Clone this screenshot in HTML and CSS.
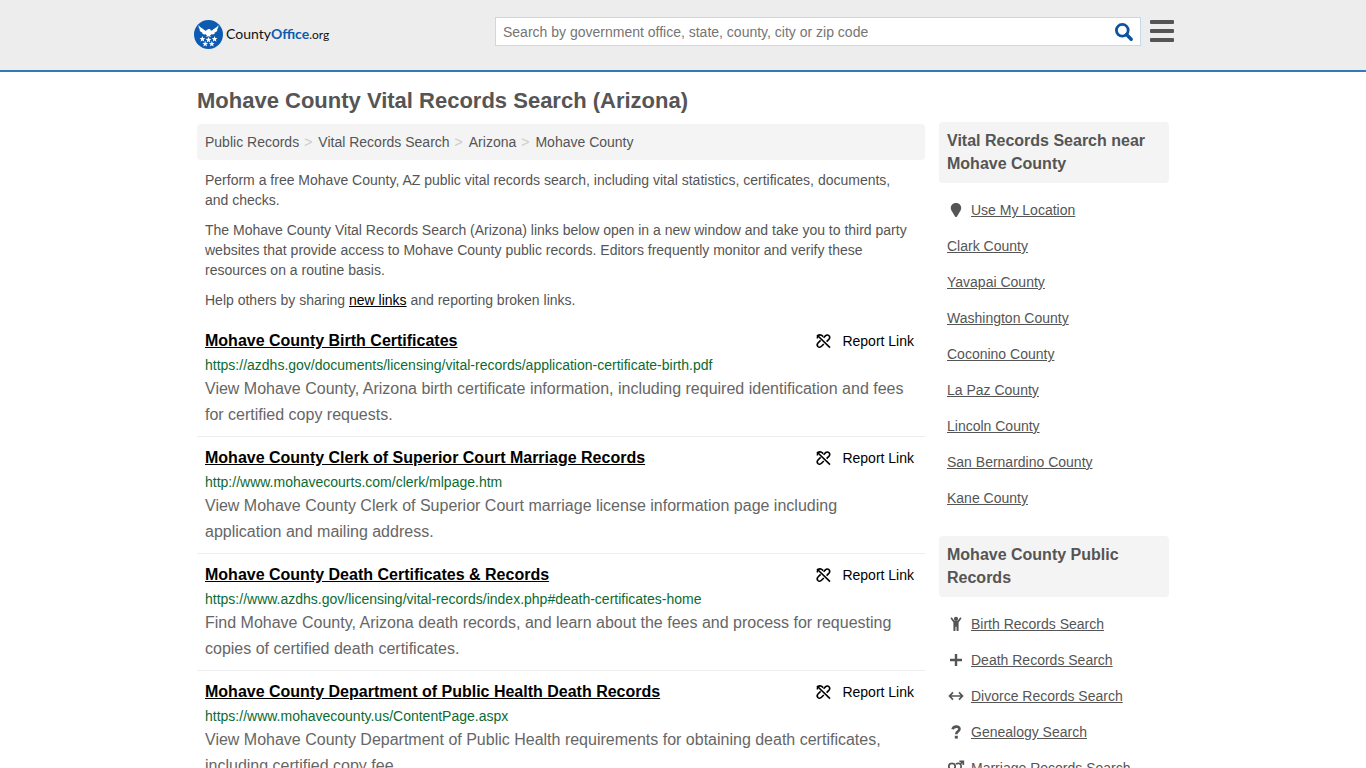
FILE: index.html
```html
<!DOCTYPE html>
<html lang="en">
<head>
    <meta charset="UTF-8">
    <meta name="viewport" content="width=device-width, initial-scale=1.0">
    <title>Mohave County Vital Records Search (Arizona)</title>
    <link rel="stylesheet" href="styles.css">
</head>
<body>
    <!-- Shared icons -->
    <svg class="sprite" aria-hidden="true">
        <symbol id="icon-unlink" viewBox="0 0 16 16">
            <g fill="none" stroke="currentColor" stroke-width="1.6">
                <path d="M2 2L15 14.6"/>
                <path d="M2.6 5.6C1.8 3.4 3.2 1.9 5 1.9C6.4 1.9 7.2 2.6 8.2 3.6"/>
                <path d="M8.6 4.8L10.4 2.9C11.5 1.8 13.1 1.8 14 2.8C15 3.9 14.8 5.3 13.8 6.4L11.6 8.6"/>
                <path d="M5.6 7.4L3 10C2 11.1 2 12.5 2.9 13.5C3.9 14.5 5.4 14.4 6.5 13.3L8.8 11"/>
            </g>
        </symbol>
    </svg>

    <header class="header">
        <div class="header-inner">
            <a class="logo" href="#" aria-label="CountyOffice.org">
                <svg class="logo-mark" viewBox="0 0 30 30" aria-hidden="true">
                    <circle cx="15" cy="15" r="15" fill="#0c5bb0"/>
                    <g fill="#fff">
                        <path d="M4.7 5.3C6.3 8.3 9.3 8.9 11.7 11.2C12.6 11.2 13 10.2 14.6 9.5C15.9 9.1 17 9.6 17.2 10.5L18.3 11.2C20.7 8.9 23.7 8.3 25.3 5.3C25.4 7.6 24.8 9 23.7 10L24.5 10.1C23.8 11.8 22.6 12.7 21.2 13L21.7 13.6C20.5 14.8 19.3 15.1 18 14.8L16.5 16.2L17.9 17.5L15 16.7L12.1 17.5L13.5 16.2L12 14.8C10.7 15.1 9.5 14.8 8.3 13.6L8.8 13C7.4 12.7 6.2 11.8 5.5 10.1L6.3 10C5.2 9 4.6 7.6 4.7 5.3Z"/>
                        <path id="star" d="M8.7 16.6L9.5 18.7L11.7 18.8L10 20.2L10.6 22.4L8.7 21.2L6.8 22.4L7.4 20.2L5.7 18.8L7.9 18.7Z"/>
                        <use href="#star" x="6.3" y="0.8"/>
                        <use href="#star" x="12.6"/>
                        <use href="#star" x="2.9" y="5"/>
                        <use href="#star" x="9.7" y="5"/>
                    </g>
                </svg>
                <span class="logo-text">County<b>Office</b><span class="logo-tld">.org</span></span>
            </a>
            <form class="search" role="search">
                <input class="search-input" type="text" aria-label="Search" placeholder="Search by government office, state, county, city or zip code">
                <button class="search-button" type="button" aria-label="Submit search">
                    <svg width="20" height="20" viewBox="0 0 20 20" aria-hidden="true">
                        <circle cx="8.3" cy="8.3" r="5.9" fill="none" stroke="currentColor" stroke-width="2.8"/>
                        <path d="M12.5 12.5L17.2 17.2" stroke="currentColor" stroke-width="3.4" stroke-linecap="round"/>
                    </svg>
                </button>
            </form>
            <button class="menu-button" type="button" aria-label="Menu">
                <span></span><span></span><span></span>
            </button>
        </div>
    </header>

    <div class="container">
        <h1>Mohave County Vital Records Search (Arizona)</h1>
        <div class="columns">
            <main class="main">
                <nav class="breadcrumb" aria-label="Breadcrumb">
                    <a href="#">Public Records</a>
                    <a href="#">Vital Records Search</a>
                    <a href="#">Arizona</a>
                    <a href="#">Mohave County</a>
                </nav>

                <div class="intro">
                    <p>Perform a free Mohave County, AZ public vital records search, including vital statistics, certificates, documents, and checks.</p>
                    <p>The Mohave County Vital Records Search (Arizona) links below open in a new window and take you to third party websites that provide access to Mohave County public records. Editors frequently monitor and verify these resources on a routine basis.</p>
                    <p>Help others by sharing <a href="#">new links</a> and reporting broken links.</p>
                </div>

                <article class="record">
                    <div class="record-head">
                        <a class="record-title" href="#">Mohave County Birth Certificates</a>
                        <button class="report" type="button"><svg class="report-icon"><use href="#icon-unlink"/></svg>Report Link</button>
                    </div>
                    <div class="record-url">https://azdhs.gov/documents/licensing/vital-records/application-certificate-birth.pdf</div>
                    <p class="record-text">View Mohave County, Arizona birth certificate information, including required identification and fees for certified copy requests.</p>
                </article>
                <article class="record">
                    <div class="record-head">
                        <a class="record-title" href="#">Mohave County Clerk of Superior Court Marriage Records</a>
                        <button class="report" type="button"><svg class="report-icon"><use href="#icon-unlink"/></svg>Report Link</button>
                    </div>
                    <div class="record-url">http://www.mohavecourts.com/clerk/mlpage.htm</div>
                    <p class="record-text">View Mohave County Clerk of Superior Court marriage license information page including application and mailing address.</p>
                </article>
                <article class="record">
                    <div class="record-head">
                        <a class="record-title" href="#">Mohave County Death Certificates &amp; Records</a>
                        <button class="report" type="button"><svg class="report-icon"><use href="#icon-unlink"/></svg>Report Link</button>
                    </div>
                    <div class="record-url">https://www.azdhs.gov/licensing/vital-records/index.php#death-certificates-home</div>
                    <p class="record-text">Find Mohave County, Arizona death records, and learn about the fees and process for requesting copies of certified death certificates.</p>
                </article>
                <article class="record">
                    <div class="record-head">
                        <a class="record-title" href="#">Mohave County Department of Public Health Death Records</a>
                        <button class="report" type="button"><svg class="report-icon"><use href="#icon-unlink"/></svg>Report Link</button>
                    </div>
                    <div class="record-url">https://www.mohavecounty.us/ContentPage.aspx</div>
                    <p class="record-text">View Mohave County Department of Public Health requirements for obtaining death certificates, including certified copy fee.</p>
                </article>
            </main>

            <aside class="sidebar">
                <h2>Vital Records Search near Mohave County</h2>
                <ul>
                    <li>
                        <svg class="side-icon" viewBox="0 0 18 18" fill="currentColor" aria-hidden="true"><path d="M9 2C5.8 2 3.8 4.2 3.8 7C3.8 8.6 4.5 9.6 5.2 10.8L8 15.4C8.5 16.2 9.5 16.2 10 15.4L12.8 10.8C13.5 9.6 14.2 8.6 14.2 7C14.2 4.2 12.2 2 9 2Z"/></svg>
                        <a href="#">Use My Location</a>
                    </li>
                    <li><a href="#">Clark County</a></li>
                    <li><a href="#">Yavapai County</a></li>
                    <li><a href="#">Washington County</a></li>
                    <li><a href="#">Coconino County</a></li>
                    <li><a href="#">La Paz County</a></li>
                    <li><a href="#">Lincoln County</a></li>
                    <li><a href="#">San Bernardino County</a></li>
                    <li><a href="#">Kane County</a></li>
                </ul>

                <h2>Mohave County Public Records</h2>
                <ul>
                    <li>
                        <svg class="side-icon" viewBox="0 0 18 18" fill="currentColor" aria-hidden="true"><circle cx="9" cy="3.9" r="2.1"/><path d="M4.9 2.6L7.4 5.8H10.6L13.1 2.6C14 2 14.8 2.8 14.2 3.8L11.6 7.6V15.2C11.6 16.4 9.6 16.4 9.5 15.2V11.8H8.5V15.2C8.4 16.4 6.4 16.4 6.4 15.2V7.6L3.8 3.8C3.2 2.8 4.2 2 4.9 2.6Z"/></svg>
                        <a href="#">Birth Records Search</a>
                    </li>
                    <li>
                        <svg class="side-icon" viewBox="0 0 18 18" fill="currentColor" aria-hidden="true"><path d="M7.8 3H10.2V7.8H15V10.2H10.2V15H7.8V10.2H3V7.8H7.8Z"/></svg>
                        <a href="#">Death Records Search</a>
                    </li>
                    <li>
                        <svg class="side-icon" viewBox="0 0 18 18" fill="none" stroke="currentColor" stroke-width="1.7" aria-hidden="true"><path d="M3 9H15M6 5.3L2.5 9L6 12.7M12 5.3L15.5 9L12 12.7"/></svg>
                        <a href="#">Divorce Records Search</a>
                    </li>
                    <li>
                        <svg class="side-icon" viewBox="0 0 18 18" aria-hidden="true"><path d="M5.6 6.2C6.3 3.2 12.5 2.4 12.5 6C12.5 8.4 9.3 8.1 9.3 11.2" fill="none" stroke="currentColor" stroke-width="2.6"/><rect x="7.8" y="12.8" width="3" height="2.8" fill="currentColor"/></svg>
                        <a href="#">Genealogy Search</a>
                    </li>
                    <li>
                        <svg class="side-icon" viewBox="0 0 18 18" fill="none" stroke="currentColor" stroke-width="1.7" aria-hidden="true"><circle cx="5" cy="7.5" r="3.2"/><path d="M9 5.2C11 3.2 14.2 4.8 14.2 7.5C14.2 10.2 11 11.8 9 9.8"/><path d="M5 11V16M2.7 13.7H7.3M13.4 5L15.9 2.5M12.4 2.3H16.3V6"/></svg>
                        <a href="#">Marriage Records Search</a>
                    </li>
                </ul>
            </aside>
        </div>
    </div>
</body>
</html>
```
FILE: styles.css
```css
* {
    box-sizing: border-box;
}
body {
    margin: 0;
    font-family: "Liberation Sans", Arial, sans-serif;
    font-size: 14px;
    line-height: 20px;
    color: #555;
    background-color: #fff;
}
button {
    padding: 0;
    border: none;
    background: none;
    font: inherit;
    cursor: pointer;
}
.sprite {
    display: none;
}

/* Header */
.header {
    background-color: #ededed;
    border-bottom: 2px solid #337ab7;
}
.header-inner {
    display: flex;
    align-items: flex-start;
    max-width: 982px;
    margin: 0 auto;
    padding: 17px 0 21px 2px;
}
.logo {
    display: flex;
    align-items: center;
    gap: 3px;
    margin-top: 3px;
    color: #111;
    text-decoration: none;
}
.logo-mark {
    width: 29px;
    height: 29px;
}
.logo-text {
    font-family: Lato, sans-serif;
    font-size: 14px;
}
.logo-text b {
    color: #0c5bb0;
}
.logo-tld {
    font-size: 12px;
}
.search {
    display: flex;
    flex: 0 1 646px;
    height: 29px;
    margin-left: auto;
    background-color: #fff;
    border: 1px solid #c5d9e8;
}
.search-input {
    flex: 1;
    min-width: 0;
    padding: 0 7px;
    border: none;
    background: none;
    font: inherit;
    color: #555;
}
.search-input::placeholder {
    color: #757575;
}
.search-button {
    display: flex;
    align-items: center;
    padding: 0 6px;
    color: #0c52a3;
}
.menu-button {
    display: flex;
    flex-direction: column;
    gap: 5px;
    width: 24px;
    margin: 3px 0 0 9px;
}
.menu-button span {
    width: 100%;
    height: 4px;
    border-radius: 1px;
    background-color: #555;
}

/* Page */
.container {
    max-width: 972px;
    margin: 0 auto;
}
h1 {
    margin: 16px 0 8px;
    font-size: 22px;
    line-height: 26px;
}
.columns {
    display: flex;
    align-items: flex-start;
    gap: 14px;
}
.main {
    flex: 1;
    margin-top: 2px;
}
.breadcrumb {
    display: flex;
    padding: 8px;
    border-radius: 4px;
    background-color: #f4f4f4;
}
.breadcrumb a {
    color: #555;
    text-decoration: none;
}
.breadcrumb a + a::before {
    content: ">";
    padding: 0 6px 0 5px;
    color: #ccc;
}
.intro {
    padding: 0 8px;
}
.intro p {
    margin: 10px 0;
}
.intro a {
    color: #000;
}

/* Records */
.record {
    padding: 8px;
    border-bottom: 1px solid #eee;
}
.record-head {
    display: flex;
    justify-content: space-between;
    line-height: 26px;
}
.record-title {
    font-size: 16px;
    font-weight: bold;
    color: #000;
}
.report {
    display: flex;
    align-items: center;
    gap: 11px;
    margin-right: 3px;
    color: #000;
}
.report-icon {
    width: 16px;
    height: 16px;
}
.record-url {
    line-height: 22px;
    color: #0b6b32;
}
.record-text {
    margin: 0;
    font-size: 16px;
    line-height: 26px;
    color: #666;
}

/* Sidebar */
.sidebar {
    width: 230px;
}
.sidebar h2 {
    margin: 0;
    padding: 7px 8px 8px;
    border-radius: 4px;
    background-color: #f4f4f4;
    font-size: 16px;
    line-height: 23px;
}
.sidebar ul {
    margin: 9px 0 20px;
    padding: 0 8px;
    list-style: none;
}
.sidebar li {
    display: flex;
    align-items: center;
    gap: 6px;
    height: 36px;
}
.sidebar a {
    color: #555;
}
.side-icon {
    width: 18px;
    height: 18px;
}
```
